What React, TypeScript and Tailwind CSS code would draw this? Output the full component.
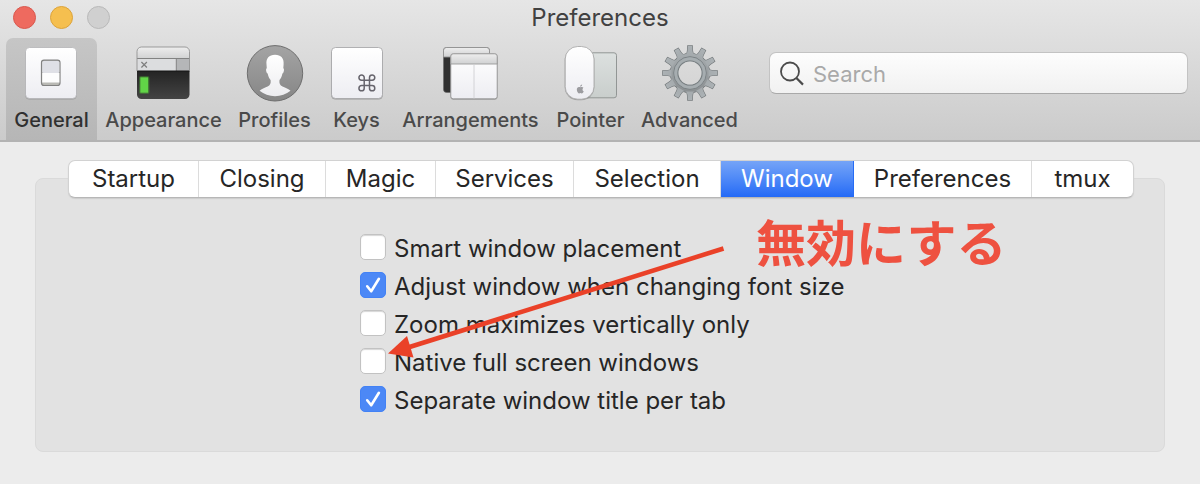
import { useState } from "react";
import type { ReactNode } from "react";

const Frame = ({ children, viewBox = "0 0 60 60" }: { children: ReactNode; viewBox?: string }) => (
  <svg viewBox={viewBox} className="size-[60px] shrink-0" aria-hidden="true">
    {children}
  </svg>
);

const GeneralIcon = () => (
  <Frame viewBox="1 0 60 60">
    <defs>
      <linearGradient id="plate" x1="0" y1="0" x2="0" y2="1">
        <stop offset="0" stopColor="#ffffff" />
        <stop offset="1" stopColor="#ededf2" />
      </linearGradient>
    </defs>
    <rect x="4" y="5.5" width="52" height="51" rx="4.5" fill="#8f8f8f" opacity=".7" />
    <rect x="4.5" y="4.5" width="51" height="51" rx="4" fill="url(#plate)" stroke="#b4b4b6" strokeWidth=".8" />
    <rect x="20.5" y="17.2" width="18.5" height="25.3" rx="2.5" fill="#b9b9b4" stroke="#828282" strokeWidth="1.2" />
    <rect x="21.2" y="18" width="17.2" height="12" rx="1.5" fill="#dfe0e6" />
    <rect x="21.2" y="30" width="17.2" height="9.5" fill="#fdfdfd" />
  </Frame>
);

const AppearanceIcon = () => (
  <Frame viewBox="1 0 60 60">
    <defs>
      <linearGradient id="bar" x1="0" y1="0" x2="0" y2="1">
        <stop offset="0" stopColor="#eeeeee" />
        <stop offset="1" stopColor="#d0d1d2" />
      </linearGradient>
      <linearGradient id="screen" x1="0" y1="0" x2="0" y2="1">
        <stop offset="0" stopColor="#242424" />
        <stop offset="1" stopColor="#444444" />
      </linearGradient>
      <clipPath id="window-shape">
        <rect x="4" y="4" width="52.5" height="52" rx="4.5" />
      </clipPath>
    </defs>
    <g clipPath="url(#window-shape)">
      <rect x="4" y="4" width="53" height="12" fill="url(#bar)" />
      <rect x="4" y="16" width="53" height="12" fill="#dcdddf" />
      <rect x="43.5" y="16" width="13" height="12" fill="#b5b6b8" />
      <path d="M4 15.5h53M43.3 16v12" stroke="#828282" strokeWidth="1" />
      <rect x="4" y="28" width="53" height="28" fill="url(#screen)" />
      <path d="M4 28h53" stroke="#151515" strokeWidth="1" />
    </g>
    <path d="M4 28V8.500a4.500 4.500 0 0 1 4.500-4.500h43.500a4.500 4.500 0 0 1 4.500 4.500V28" fill="none" stroke="#929292" strokeWidth=".9" />
    <path d="M8.400 19l5.500 5.500M13.900 19l-5.500 5.500" stroke="#7e7e7e" strokeWidth="1.200" />
    <rect x="6" y="33" width="10.500" height="18" rx="2" fill="#54d236" opacity=".3" />
    <rect x="7.300" y="34.300" width="7.900" height="15.400" fill="#61d547" />
  </Frame>
);

const ProfilesIcon = () => (
  <Frame>
    <defs>
      <linearGradient id="disc" x1="0" y1="0" x2="0" y2="1">
        <stop offset="0" stopColor="#a4a4a4" />
        <stop offset="1" stopColor="#868686" />
      </linearGradient>
      <linearGradient id="bust" x1="0" y1="0" x2="0" y2="1">
        <stop offset="0" stopColor="#ffffff" />
        <stop offset="1" stopColor="#ededf0" />
      </linearGradient>
    </defs>
    <circle cx="30" cy="30.300" r="27.700" fill="url(#disc)" stroke="#6e6e6e" strokeWidth="1" />
    <path
      d="M30 11.800c-6 0-9.100 3.500-8.500 9.600l.3 3.800c-1.200.2-.8 4.600.9 5.300.5 3 1.500 4.900 2.900 6.400.5 3.400-.4 5.300-3 6.500-3.300 1.500-6 2.200-8 4.300 4.300 3.400 9.700 5.500 15.400 5.500s11.200-2.100 15.500-5.500c-2-2.100-4.700-2.800-8-4.300-2.600-1.200-3.500-3.100-3-6.500 1.400-1.500 2.400-3.400 2.900-6.400 1.700-.7 2.100-5.100.9-5.300l.3-3.800c.6-6.100-2.600-9.600-8.600-9.600z"
      fill="url(#bust)"
    />
  </Frame>
);

const KeysIcon = () => (
  <Frame>
    <rect x="4" y="5.500" width="52" height="51" rx="4.500" fill="#858585" opacity=".7" />
    <rect x="4.500" y="4.500" width="51" height="51" rx="4" fill="url(#plate)" stroke="#a8a8aa" strokeWidth=".9" />
    <path
      transform="translate(29.300 29.300) scale(.88)"
      d="M15 6v12a3 3 0 1 0 3-3H6a3 3 0 1 0 3 3V6a3 3 0 1 0-3 3h12a3 3 0 1 0-3-3"
      fill="none"
      stroke="#66646c"
      strokeWidth="1.700"
    />
  </Frame>
);

const ArrangementsIcon = () => (
  <Frame viewBox="1 0 60 60">
    <rect x="3.500" y="4.500" width="46" height="45" rx="3" fill="#303030" stroke="#686868" strokeWidth=".6" />
    <path d="M3.500 14V7.500a3 3 0 0 1 3-3h40a3 3 0 0 1 3 3V14z" fill="url(#bar)" stroke="#929292" strokeWidth=".9" />
    <rect x="10.500" y="11.500" width="47" height="45.300" rx="3" fill="#777" opacity=".6" />
    <rect x="10.800" y="10.800" width="46.400" height="45" rx="2.500" fill="url(#plate)" stroke="#999" strokeWidth=".9" />
    <path d="M10.800 21v-7.700a2.500 2.500 0 0 1 2.500-2.500h41.400a2.500 2.500 0 0 1 2.500 2.500V21z" fill="url(#bar)" stroke="#999" strokeWidth=".9" />
    <path d="M34 21.500v34" stroke="#cfcfd2" strokeWidth=".9" />
  </Frame>
);

const PointerIcon = () => (
  <Frame viewBox="1 0 60 60">
    <defs>
      <linearGradient id="pad" x1="0" y1="0" x2="0" y2="1">
        <stop offset="0" stopColor="#dce0df" />
        <stop offset="1" stopColor="#c9cecc" />
      </linearGradient>
    </defs>
    <rect x="22" y="9.800" width="34.500" height="45" rx="2.500" fill="url(#pad)" stroke="#929695" strokeWidth="1" />
    <rect x="4.700" y="4.300" width="29.600" height="53" rx="13" fill="#777" opacity=".55" />
    <rect x="5.200" y="3.500" width="28.800" height="52.700" rx="12.500" fill="url(#plate)" stroke="#aaa" strokeWidth=".9" />
    <path
      transform="translate(2 4.500) scale(.9)"
      d="M22.800 46.900c0-1.100.5-1.700 1.100-2.100-1-1.200-2.300-1-3.600-.5-1.300-.6-2.500-.4-3.200.5-1.600 2.100.3 6.200 1.900 6.200.6 0 .8-.4 1.400-.4s.9.400 1.500.4c1 0 2-1.500 2.200-2.500-.8-.3-1.300-.8-1.300-1.600zM20.200 43.500c1.400 0 2.200-1.100 2.200-2.300-1.300 0-2.300 1.100-2.200 2.300z"
      fill="#9c9ca0"
    />
  </Frame>
);

const teeth = [0, 30, 60, 90, 120, 150, 180, 210, 240, 270, 300, 330];

const AdvancedIcon = () => (
  <Frame>
    <defs>
      <linearGradient id="gear" gradientUnits="userSpaceOnUse" x1="0" y1="2" x2="0" y2="58">
        <stop offset="0" stopColor="#acb2b5" />
        <stop offset="1" stopColor="#85898b" />
      </linearGradient>
      <mask id="gear-hole">
        <rect width="60" height="60" fill="white" />
        <circle cx="30" cy="30" r="11.500" fill="black" />
      </mask>
      <g id="gear-body">
        <circle cx="30" cy="30" r="19.500" />
        {teeth.map((angle) => (
          <path key={angle} transform={`rotate(${angle} 30 30)`} d="M25.500 11.500q2-1 2-3.500l.3-5.200h4.400l.3 5.200q0 2.500 2 3.500z" />
        ))}
      </g>
    </defs>
    <g mask="url(#gear-hole)">
      <use href="#gear-body" fill="#73787a" stroke="#73787a" strokeWidth="1.200" />
      <use href="#gear-body" fill="url(#gear)" />
      <circle cx="30" cy="30" r="16.300" fill="#a0a7aa" stroke="#7b8285" strokeWidth="1" />
      <circle cx="30" cy="30" r="14.300" fill="none" stroke="#a6adb0" strokeWidth="2.500" />
      <circle cx="30" cy="30" r="12" fill="none" stroke="#777e81" strokeWidth="1.200" />
    </g>
  </Frame>
);

const tools = [
  { label: "General", width: "w-[91px]", Icon: GeneralIcon },
  { label: "Appearance", width: "w-[133px]", Icon: AppearanceIcon },
  { label: "Profiles", width: "w-[89px]", Icon: ProfilesIcon },
  { label: "Keys", width: "w-[75px]", Icon: KeysIcon },
  { label: "Arrangements", width: "w-[153px]", Icon: ArrangementsIcon },
  { label: "Pointer", width: "w-[87px]", Icon: PointerIcon },
  { label: "Advanced", width: "w-[111px]", Icon: AdvancedIcon },
];

const tabs = ["Startup", "Closing", "Magic", "Services", "Selection", "Window", "Preferences", "tmux"];

const options = [
  { label: "Smart window placement", on: false },
  { label: "Adjust window when changing font size", on: true },
  { label: "Zoom maximizes vertically only", on: false },
  { label: "Native full screen windows", on: false },
  { label: "Separate window title per tab", on: true },
];

function Option({ label, on }: { label: string; on: boolean }) {
  return (
    <label className="flex h-[38px] items-center gap-2">
      <span className="grid size-[26px] shrink-0">
        <input
          type="checkbox"
          defaultChecked={on}
          className="peer col-start-1 row-start-1 size-[26px] appearance-none rounded-[5px] border border-[#c2c2c2] bg-white shadow-[inset_0_1px_1px_#d6d6d6] checked:border-[#4382f5] checked:bg-[#4c88f6] checked:shadow-none"
        />
        <svg viewBox="0 0 26 26" className="pointer-events-none invisible col-start-1 row-start-1 size-[26px] peer-checked:visible" aria-hidden="true">
          <path d="M7.200 14.300l4 5L18.900 6.800" fill="none" stroke="white" strokeWidth="2.600" strokeLinecap="round" strokeLinejoin="round" />
        </svg>
      </span>
      <span className="whitespace-nowrap pt-[3px]">{label}</span>
    </label>
  );
}

export default function App() {
  const [tool, setTool] = useState("General");
  const [tab, setTab] = useState("Window");

  return (
    <div className="min-h-screen bg-[#ececec] font-['Inter','Noto_Sans_CJK_JP',sans-serif] text-[#262626]">
      <header className="border-b-2 border-[#b3b3b3] bg-linear-to-b from-[#e6e6e6] to-[#cbcbcb]">
        <div className="grid h-[38px] grid-cols-[1fr_auto_1fr] items-center pb-1">
          <div className="flex gap-[14px] pl-[13px]">
            <button aria-label="Close" className="size-[23px] rounded-full border border-[#d9584e] bg-[#ee6a5f]" />
            <button aria-label="Minimize" className="size-[23px] rounded-full border border-[#dca33a] bg-[#f5bf4f]" />
            <button aria-label="Zoom" className="size-[23px] rounded-full border border-[#b9b9b9] bg-[#d0d0d0]" />
          </div>
          <h1 className="pt-0.5 text-2xl leading-8 text-[#414141]">Preferences</h1>
        </div>
        <div className="flex items-start pr-3 pl-[6px]">
          <nav className="flex shrink-0" aria-label="Preference sections">
            {tools.map(({ label, width, Icon }) => (
              <button
                key={label}
                onClick={() => setTool(label)}
                className={`flex h-[102px] flex-col items-center rounded-t-[7px] pt-[5px] text-xl leading-7 font-medium ${width} ${
                  tool === label ? "bg-linear-to-b from-[#c6c6c6] to-[#b6b6b6] text-[#303030]" : "text-[#4a4a4a]"
                }`}
              >
                <Icon />
                <span className="pt-[3px]">{label}</span>
              </button>
            ))}
          </nav>
          <label className="mt-[14px] ml-6 flex h-[42px] min-w-0 flex-1 items-center gap-2 rounded-[7px] border border-[#c3c3c3] border-b-[#a9a9a9] bg-linear-to-b from-[#fdfdfd] to-[#f1f1f1] pl-[9px]">
            <svg viewBox="0 0 26 26" className="size-[26px] shrink-0" fill="none" stroke="#4b4b4b" strokeWidth="1.800" aria-hidden="true">
              <circle cx="11" cy="11.500" r="9" />
              <path d="M17.400 18l6.600 6.600" strokeWidth="2.200" />
            </svg>
            <input type="search" aria-label="Search" placeholder="Search" className="w-full min-w-0 bg-transparent pt-0.5 text-[22px] leading-8 outline-none placeholder:text-[#a9a9a9]" />
          </label>
        </div>
      </header>

      <main className="px-[35px] pt-9 pb-8">
        <section className="rounded-lg border border-[#dadada] bg-[#e2e2e2] pr-[30px] pb-[33px] pl-8">
          <div
            role="tablist"
            className="-mt-[19px] grid grid-cols-[130fr_127fr_110fr_138fr_147fr_133fr_178fr_101fr] overflow-hidden rounded-[7px] border border-[#d2d2d2] border-b-[#b7b7b7] bg-white shadow-[0_1px_1px_#cccccc]"
          >
            {tabs.map((name) => (
              <button
                key={name}
                role="tab"
                aria-selected={tab === name}
                onClick={() => setTab(name)}
                className={`h-9 border-r text-2xl leading-9 last:border-r-0 ${
                  tab === name ? "border-[#276cf4] bg-linear-to-b from-[#75a4f7] to-[#2369f6] text-white" : "border-[#dcdcdc]"
                }`}
              >
                {name}
              </button>
            ))}
          </div>
          <div className="relative mt-[30px] ml-[292px] text-2xl leading-8">
            {options.map((option) => (
              <Option key={option.label} {...option} />
            ))}
            <svg viewBox="0 0 370 120" className="pointer-events-none absolute top-4 left-6 h-[120px] w-[370px]" aria-hidden="true">
              <path d="M339.500 4.500L24 103.500" stroke="#ea4128" strokeWidth="4.600" />
              <path d="M4 109.500L23 92l6.500 21.500z" fill="#ea4128" />
            </svg>
            <p className="pointer-events-none absolute -top-[18px] left-[396px] font-['Noto_Sans_CJK_JP',sans-serif] text-[50px] leading-[60px] font-bold whitespace-nowrap text-[#ee5140]">
              無効にする
            </p>
          </div>
        </section>
      </main>
    </div>
  );
}
